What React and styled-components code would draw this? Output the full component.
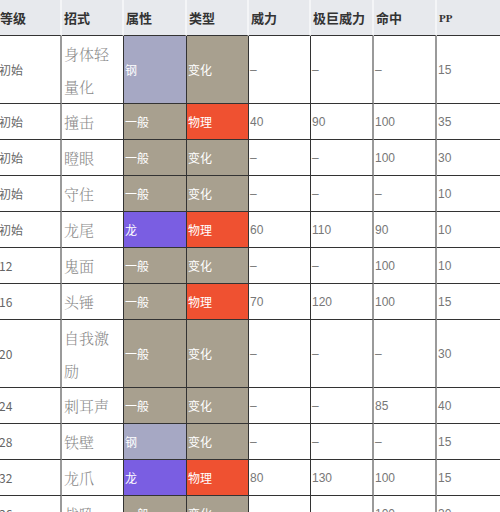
import styled, { createGlobalStyle } from "styled-components";

const GlobalStyle = createGlobalStyle`
  html, body {
    margin: 0;
    padding: 0;
    background: #fff;
    overflow: hidden;
  }
  body {
    font-family: "Liberation Sans", "Noto Sans CJK SC", sans-serif;
  }
`;

// 每一列的宽度和右边框
const columns = [
  { title: "等级", width: 64, line: "soft" },
  { title: "招式", width: 62, line: "dark" },
  { title: "属性", width: 63, line: "dark" },
  { title: "类型", width: 62, line: "dark" },
  { title: "威力", width: 62, line: "dark" },
  { title: "极巨威力", width: 63, line: "soft" },
  { title: "命中", width: 63, line: "soft" },
  { title: "PP", width: 65, line: "none" },
];

const typeColors = {
  钢: "#a6a8c4",
  一般: "#a8a08f",
  龙: "#7a5ee2",
  物理: "#ef5131",
  变化: "#a8a08f",
};

const moves = [
  ["初始", "身体轻量化", "钢", "变化", "–", "–", "–", "15", true],
  ["初始", "撞击", "一般", "物理", "40", "90", "100", "35"],
  ["初始", "瞪眼", "一般", "变化", "–", "–", "100", "30"],
  ["初始", "守住", "一般", "变化", "–", "–", "–", "10"],
  ["初始", "龙尾", "龙", "物理", "60", "110", "90", "10"],
  ["12", "鬼面", "一般", "变化", "–", "–", "100", "10"],
  ["16", "头锤", "一般", "物理", "70", "120", "100", "15"],
  ["20", "自我激励", "一般", "变化", "–", "–", "–", "30", true],
  ["24", "刺耳声", "一般", "变化", "–", "–", "85", "40"],
  ["28", "铁壁", "钢", "变化", "–", "–", "–", "15"],
  ["32", "龙爪", "龙", "物理", "80", "130", "100", "15"],
  ["36", "战吼", "一般", "变化", "–", "–", "100", "30"],
];

export default function App() {
  return (
    <>
      <GlobalStyle />
      <Table>
        <colgroup>
          {columns.map((c) => (
            <col key={c.title} style={{ width: c.width }} />
          ))}
        </colgroup>
        <thead>
          <tr>
            {columns.map((c) => (
              <HeadCell key={c.title} $small={c.title === "PP"}>
                {c.title}
              </HeadCell>
            ))}
          </tr>
        </thead>
        <tbody>
          {moves.map((m) => {
            const [level, name, type, cat, power, maxPower, acc, pp, tall] = m;
            return (
              <Row key={name} $tall={tall}>
                <Cell $line="soft">{level}</Cell>
                <MoveCell $line="dark">{name}</MoveCell>
                <TypeCell $line="dark" $bg={typeColors[type]}>
                  {type}
                </TypeCell>
                <TypeCell $line="dark" $bg={typeColors[cat]}>
                  {cat}
                </TypeCell>
                <NumCell $line="dark">{power}</NumCell>
                <NumCell $line="soft">{maxPower}</NumCell>
                <NumCell $line="soft">{acc}</NumCell>
                <NumCell $line="none">{pp}</NumCell>
              </Row>
            );
          })}
        </tbody>
      </Table>
    </>
  );
}

const lineStyle = {
  soft: "2px solid #9a9a9a",
  dark: "1px solid #333",
  none: "0",
};

const Table = styled.table`
  table-layout: fixed;
  border-collapse: separate;
  border-spacing: 0;
  width: 504px;
  margin-left: -2px;
`;

const HeadCell = styled.th`
  box-sizing: border-box;
  height: 36px;
  padding: 0 0 0 2px;
  background: #e7e9ed;
  border-right: 2px solid #f4f5f7;
  border-bottom: 1px solid #333;
  text-align: left;
  vertical-align: middle;
  font-size: ${(p) => (p.$small ? "11px" : "13px")};
  font-family: ${(p) =>
    p.$small
      ? '"Liberation Serif", serif'
      : '"Noto Sans CJK SC", sans-serif'};
  font-weight: bold;
  color: #333;
  white-space: nowrap;
  overflow: hidden;
`;

const Row = styled.tr`
  height: ${(p) => (p.$tall ? "68px" : "36px")};
`;

const Cell = styled.td`
  box-sizing: border-box;
  padding: 0 0 0 1px;
  border-bottom: 1px solid #333;
  border-right: ${(p) => lineStyle[p.$line]};
  vertical-align: middle;
  text-align: left;
  font-family: "Noto Sans CJK SC", sans-serif;
  font-size: 12px;
  color: #666;
  overflow: hidden;
`;

const MoveCell = styled(Cell)`
  padding-left: 2px;
  font-family: "Noto Serif CJK SC", "Noto Sans CJK SC", serif;
  font-size: 15px;
  line-height: 33px;
  font-weight: 300;
  color: #8a8a8a;
  word-break: break-all;
`;

const TypeCell = styled(Cell)`
  background: ${(p) => p.$bg};
  color: #fff;
  font-size: 12px;
`;

const NumCell = styled(Cell)`
  font-family: "Liberation Sans", sans-serif;
  font-size: 12px;
  color: #777;
`;
